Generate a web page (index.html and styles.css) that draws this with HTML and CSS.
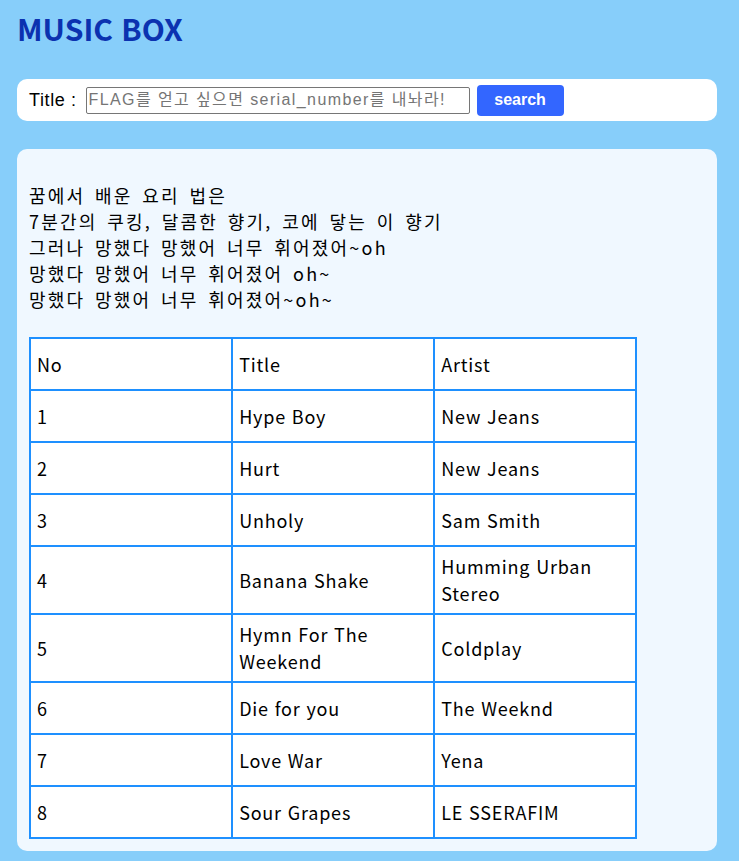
FILE: index.html
```html
<!DOCTYPE html>
<html lang="ko">
<head>
    <meta charset="UTF-8">
    <meta name="viewport" content="width=device-width, initial-scale=1.0">
    <title>MUSIC BOX</title>
    <link rel="stylesheet" href="styles.css">
</head>
<body>
    <div class="wrap">
        <h1>MUSIC BOX</h1>
        <form class="search-box" onsubmit="return false;">
            <label for="title">Title :</label>
            <input type="text" id="title" name="title" placeholder="FLAG를 얻고 싶으면 serial_number를 내놔라!">
            <button type="submit">search</button>
        </form>
        <div class="panel">
            <p class="lyrics">
                꿈에서 배운 요리 법은<br>
                7분간의 쿠킹, 달콤한 향기, 코에 닿는 이 향기<br>
                그러나 망했다 망했어 너무 휘어졌어~oh<br>
                망했다 망했어 너무 휘어졌어 oh~<br>
                망했다 망했어 너무 휘어졌어~oh~
            </p>
            <table class="songs">
                <tr><td>No</td><td>Title</td><td>Artist</td></tr>
                <tr><td>1</td><td>Hype Boy</td><td>New Jeans</td></tr>
                <tr><td>2</td><td>Hurt</td><td>New Jeans</td></tr>
                <tr><td>3</td><td>Unholy</td><td>Sam Smith</td></tr>
                <tr><td>4</td><td>Banana Shake</td><td>Humming Urban Stereo</td></tr>
                <tr><td>5</td><td>Hymn For The Weekend</td><td>Coldplay</td></tr>
                <tr><td>6</td><td>Die for you</td><td>The Weeknd</td></tr>
                <tr><td>7</td><td>Love War</td><td>Yena</td></tr>
                <tr><td>8</td><td>Sour Grapes</td><td>LE SSERAFIM</td></tr>
            </table>
        </div>
    </div>
</body>
</html>
```

FILE: styles.css
```css
body {
    background-color: #87cefa;
    margin: 0;
    font-family: "Noto Sans CJK KR", "Noto Sans", sans-serif;
}
.wrap {
    width: 700px;
    padding: 0 17px;
}
h1 {
    margin: 0;
    padding-top: 8px;
    height: 71px;
    line-height: 40px;
    font-size: 30px;
    font-weight: bold;
    color: #0b32b0;
}
.search-box {
    display: flex;
    align-items: center;
    height: 42px;
    padding: 0 12px;
    background: #fff;
    border-radius: 10px;
    font-family: "Liberation Sans", Arial, "Noto Sans CJK KR", sans-serif;
}
.search-box label {
    font-size: 18px;
    letter-spacing: 0.6px;
    margin-right: 9px;
}
.search-box input {
    width: 384px;
    height: 27px;
    box-sizing: border-box;
    padding: 1px 2px;
    border: 1px solid #767676;
    border-radius: 2px;
    font-size: 16px;
    letter-spacing: 1.4px;
    font-family: "Liberation Sans", Arial, "Noto Sans CJK KR", sans-serif;
}
.search-box input::placeholder {
    color: #757575;
}
.search-box button {
    margin-left: 7px;
    width: 87px;
    height: 31px;
    border: none;
    border-radius: 4px;
    background-color: #3366ff;
    color: #fff;
    font-size: 16px;
    font-weight: bold;
    font-family: "Liberation Sans", Arial, sans-serif;
    cursor: pointer;
}
.panel {
    margin-top: 28px;
    padding: 12px;
    background: #f0f8ff;
    border-radius: 10px;
}
.lyrics {
    margin: 21px 0 25px;
    font-size: 18px;
    line-height: 26px;
    letter-spacing: 2.2px;
    word-spacing: 2.5px;
}
.songs {
    width: 90%;
    table-layout: fixed;
    border-collapse: collapse;
    background: #fff;
    font-size: 18px;
    letter-spacing: 0.8px;
}
.songs tr {
    height: 52px;
}
.songs td {
    border: 2px solid #1e90ff;
    padding: 6px 7px 6px 6px;
    line-height: 27px;
}
```
